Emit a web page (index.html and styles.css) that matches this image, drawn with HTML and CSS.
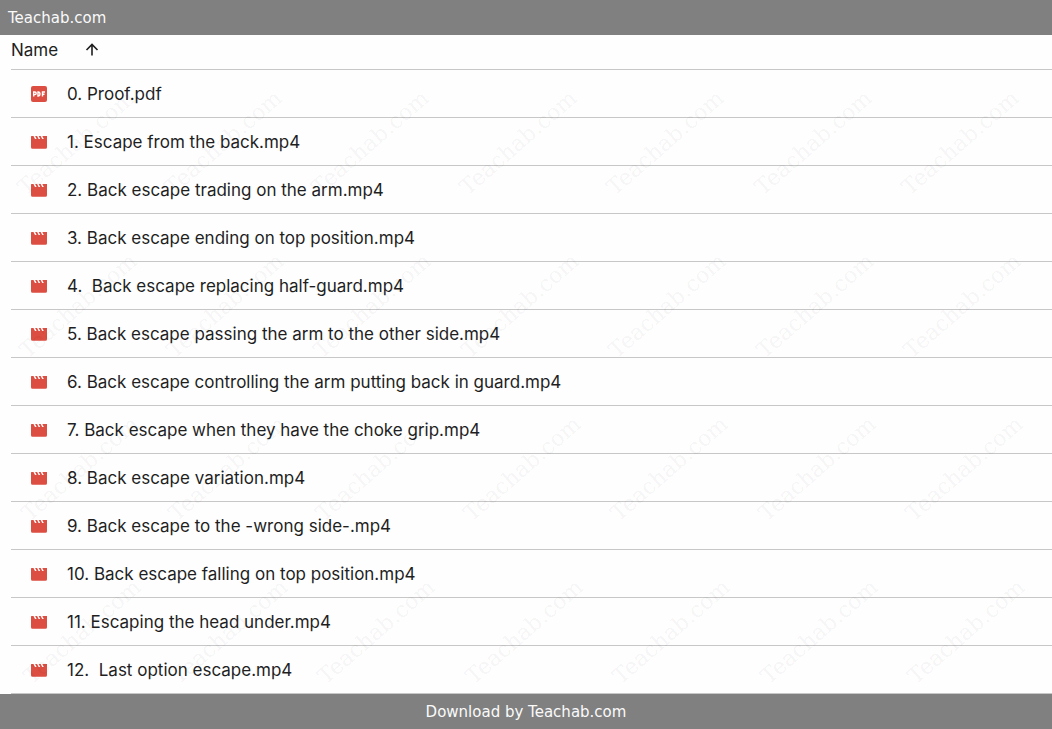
FILE: index.html
```html
<!DOCTYPE html>
<html lang="en">
<head>
  <meta charset="UTF-8">
  <meta name="viewport" content="width=device-width, initial-scale=1">
  <title>Teachab.com</title>
  <link rel="stylesheet" href="styles.css">
</head>
<body>
  <header class="bar">Teachab.com</header>

  <main class="files">
    <button class="sort" type="button">
      Name
      <svg class="arrow" viewBox="0 0 14 14" aria-hidden="true">
        <path d="M7 12.500V2M1.500 7L7 1.500L12.500 7"/>
      </svg>
    </button>
    <ul class="file-list" id="file-list"></ul>
    <div class="watermarks" id="watermarks" aria-hidden="true"></div>
  </main>

  <footer class="bar bar-bottom">Download by Teachab.com</footer>

  <svg class="sprite" aria-hidden="true">
    <symbol id="pdf" viewBox="0 0 16 16">
      <rect width="16" height="16" rx="2" fill="#dc4e41"/>
      <path d="M2.700 10.500V6h1.200a1.200 1.200 0 0 1 0 2.600H2.700M7 6v4h.5a1.400 1.400 0 0 0 1.400-1.400V7.400A1.400 1.400 0 0 0 7.500 6zM11.500 10.500V6h2.500M11.500 8.300h2" fill="none" stroke="#fff" stroke-width="1.400"/>
    </symbol>
    <symbol id="video" viewBox="0 0 16 16">
      <path d="M0 2.500L.5 2h2l1.500 3h1.600l-1.500-3h2l1.500 3h1.600l-1.500-3h2l1.500 3h1.600l-1.500-3H16V13.300a1.500 1.500 0 0 1-1.500 1.500h-13A1.500 1.500 0 0 1 0 13.300z" fill="#dc4e41"/>
    </symbol>
  </svg>

  <script>
    const files = [
      '0. Proof.pdf',
      '1. Escape from the back.mp4',
      '2. Back escape trading on the arm.mp4',
      '3. Back escape ending on top position.mp4',
      '4.  Back escape replacing half-guard.mp4',
      '5. Back escape passing the arm to the other side.mp4',
      '6. Back escape controlling the arm putting back in guard.mp4',
      '7. Back escape when they have the choke grip.mp4',
      '8. Back escape variation.mp4',
      '9. Back escape to the -wrong side-.mp4',
      '10. Back escape falling on top position.mp4',
      '11. Escaping the head under.mp4',
      '12.  Last option escape.mp4'
    ];

    document.getElementById('file-list').innerHTML = files.map(name => {
      const icon = name.endsWith('.pdf') ? 'pdf' : 'video';
      return `<li class="file"><svg class="icon" aria-hidden="true"><use href="#${icon}"/></svg><span class="file-name">${name}</span></li>`;
    }).join('');

    const row = '<div class="mark-row">' + '<div class="mark"><span>Teachab.com</span></div>'.repeat(7) + '</div>';
    document.getElementById('watermarks').innerHTML = row.repeat(4);
  </script>
</body>
</html>
```

FILE: styles.css
```css
* {
  box-sizing: border-box;
}
body {
  margin: 0;
  background: #fefefe;
  color: #1f1f1f;
  font-family: Inter, "Liberation Sans", sans-serif;
  font-size: 17px;
}
.bar {
  padding: 9px 8px 8px;
  background: #808080;
  color: #fafafa;
  font-family: "DejaVu Sans", sans-serif;
  font-size: 15px;
  line-height: 18px;
}
.bar-bottom {
  text-align: center;
}
.files {
  position: relative;
  padding-left: 11px;
  overflow: hidden;
}
.sort {
  display: flex;
  align-items: center;
  gap: 27px;
  width: 100%;
  height: 34px;
  padding: 0 0 4px;
  border: 0;
  background: none;
  color: inherit;
  font: inherit;
  cursor: pointer;
}
.arrow {
  width: 14px;
  height: 14px;
  fill: none;
  stroke: #1f1f1f;
  stroke-width: 1.6;
}
.file-list {
  margin: 0;
  padding: 0;
  border-bottom: 1px solid #c7c7c7;
  list-style: none;
}
.file {
  display: flex;
  align-items: center;
  gap: 20px;
  height: 48px;
  padding-left: 20px;
  border-top: 1px solid #c7c7c7;
}
.icon {
  width: 16px;
  height: 16px;
}
.file-name {
  white-space: pre;
}
.watermarks {
  position: absolute;
  top: 26px;
  right: 18px;
  left: 2px;
  pointer-events: none;
}
.mark-row {
  display: flex;
  height: 163px;
}
.mark-row:nth-child(2) {
  margin: 0 -2px 0 2px;
}
.mark-row:nth-child(3) {
  margin: 0 -4px 0 4px;
}
.mark-row:nth-child(4) {
  margin: 0 -6px 0 6px;
}
.mark {
  display: flex;
  flex: 1;
  align-items: center;
  justify-content: center;
  color: rgba(0, 0, 0, 0.05);
  font-family: "DejaVu Serif", serif;
  font-size: 22px;
}
.mark span {
  transform: rotate(-41deg);
}
.sprite {
  display: none;
}
```
